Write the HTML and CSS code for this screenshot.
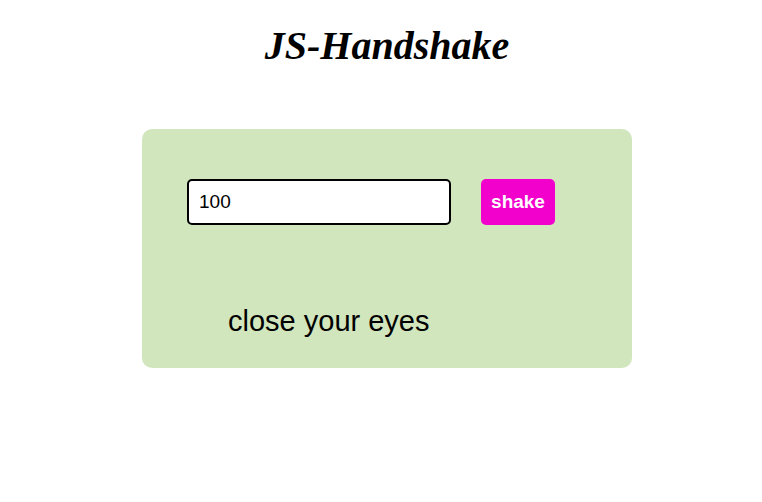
FILE: index.html
```html
<!DOCTYPE html>
<html>
<head>
<meta charset="utf-8">
<link rel="stylesheet" href="styles.css">
</head>
<body>
<div class="page">
  <h1 class="title">JS-Handshake</h1>
  <div class="card">
    <div class="controls">
      <input class="count" type="text" value="100">
      <button class="shake">shake</button>
    </div>
    <p class="message">close your eyes</p>
  </div>
</div>
</body>
</html>
```

FILE: styles.css
```css
html, body {
  margin: 0;
  padding: 0;
  background: #ffffff;
}
.page {
  width: 490px;
  margin-left: 142px;
  padding-top: 20px;
}
.title {
  margin: 0;
  text-align: center;
  font-family: "Liberation Serif", serif;
  font-weight: bold;
  font-style: italic;
  font-size: 40px;
  line-height: 52px;
  color: #000;
}
.card {
  margin-top: 57px;
  background: #d1e6bd;
  border-radius: 10px;
  padding: 50px 0 30px 45px;
  height: 159px;
}
.controls {
  display: flex;
  gap: 30px;
}
.count {
  box-sizing: border-box;
  width: 264px;
  height: 46px;
  border: 2px solid #000;
  border-radius: 5px;
  padding: 0 10px;
  font-family: "Liberation Sans", Arial, sans-serif;
  font-size: 19px;
  color: #000;
  background: #fff;
  outline: none;
}
.shake {
  box-sizing: border-box;
  width: 74px;
  height: 46px;
  border: none;
  border-radius: 5px;
  background: #f200cc;
  color: #fff;
  font-family: "Liberation Sans", Arial, sans-serif;
  font-weight: bold;
  font-size: 19px;
  padding: 0;
}
.message {
  margin: 80px 0 0 41px;
  font-family: "Liberation Sans", Arial, sans-serif;
  font-size: 29px;
  line-height: 33px;
  color: #000;
}
```
